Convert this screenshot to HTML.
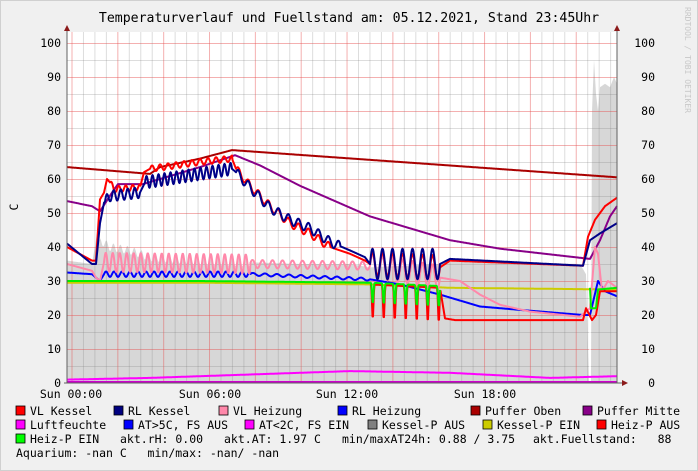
<!DOCTYPE html>
<html><head><meta charset="utf-8"><style>
html,body{margin:0;padding:0;background:#f0f0f0;}
svg{display:block;}
text{font-family:"DejaVu Sans Mono","Liberation Mono",monospace;white-space:pre;}
</style></head><body>
<svg id="s" width="698" height="471" xmlns="http://www.w3.org/2000/svg">
<rect x="0" y="0" width="698" height="471" fill="#f0f0f0"/>
<rect x="0.5" y="0.5" width="697" height="470" fill="none" stroke="#d0d0d0"/>
<rect x="67" y="32" width="550" height="351" fill="#ffffff"/>
<g id="area"></g>
<g id="grid"></g>
<g id="lines"></g>
<line x1="67" y1="383" x2="67" y2="30" stroke="#606060" stroke-width="1"/>
<polygon points="64,31 70,31 67,25" fill="#8b1a1a"/>
<line x1="617" y1="383" x2="617" y2="30" stroke="#606060" stroke-width="1"/>
<polygon points="614,31 620,31 617,25" fill="#8b1a1a"/>
<line x1="64" y1="383" x2="622" y2="383" stroke="#606060" stroke-width="1"/>
<polygon points="622,380 622,386 628,383" fill="#8b1a1a"/>
<text x="349" y="22" font-size="13.2" text-anchor="middle" fill="#000">Temperaturverlauf und Fuellstand am: 05.12.2021, Stand 23:45Uhr</text>
<text transform="translate(18,207) rotate(-90)" font-size="11.5" text-anchor="middle" fill="#000">C</text>
<text transform="translate(685,7) rotate(90)" font-size="8" fill="#c8c8c8">RRDTOOL / TOBI OETIKER</text>
<g id="ylab" font-size="11.5" fill="#000"></g>
<g font-size="11.5" fill="#000" text-anchor="middle">
<text x="71" y="398">Sun 00:00</text>
<text x="210" y="398">Sun 06:00</text>
<text x="347" y="398">Sun 12:00</text>
<text x="485" y="398">Sun 18:00</text>
</g>
<g font-size="11.5" fill="#000">
<rect x="16" y="406" width="9" height="9" fill="#ff0000" stroke="#000" stroke-width="0.8"/><text x="30" y="415">VL Kessel</text>
<rect x="114" y="406" width="9" height="9" fill="#000080" stroke="#000" stroke-width="0.8"/><text x="128" y="415">RL Kessel</text>
<rect x="219" y="406" width="9" height="9" fill="#ff88aa" stroke="#000" stroke-width="0.8"/><text x="233" y="415">VL Heizung</text>
<rect x="338" y="406" width="9" height="9" fill="#0000ff" stroke="#000" stroke-width="0.8"/><text x="352" y="415">RL Heizung</text>
<rect x="471" y="406" width="9" height="9" fill="#aa0000" stroke="#000" stroke-width="0.8"/><text x="485" y="415">Puffer Oben</text>
<rect x="583" y="406" width="9" height="9" fill="#880088" stroke="#000" stroke-width="0.8"/><text x="597" y="415">Puffer Mitte</text>
<rect x="16" y="420" width="9" height="9" fill="#ff00ff" stroke="#000" stroke-width="0.8"/><text x="30" y="429">Luftfeuchte</text>
<rect x="124" y="420" width="9" height="9" fill="#0000ff" stroke="#000" stroke-width="0.8"/><text x="138" y="429">AT&gt;5C, FS AUS</text>
<rect x="245" y="420" width="9" height="9" fill="#ff00ff" stroke="#000" stroke-width="0.8"/><text x="259" y="429">AT&lt;2C, FS EIN</text>
<rect x="368" y="420" width="9" height="9" fill="#808080" stroke="#000" stroke-width="0.8"/><text x="382" y="429">Kessel-P AUS</text>
<rect x="483" y="420" width="9" height="9" fill="#cccc00" stroke="#000" stroke-width="0.8"/><text x="497" y="429">Kessel-P EIN</text>
<rect x="597" y="420" width="9" height="9" fill="#ff0000" stroke="#000" stroke-width="0.8"/><text x="611" y="429">Heiz-P AUS</text>
<rect x="16" y="434" width="9" height="9" fill="#00ff00" stroke="#000" stroke-width="0.8"/><text x="30" y="443">Heiz-P EIN</text>
<text x="120" y="443">akt.rH: 0.00</text>
<text x="224" y="443">akt.AT: 1.97 C</text>
<text x="342" y="443">min/maxAT24h: 0.88 / 3.75</text>
<text x="533" y="443">akt.Fuellstand:   88</text>
<text x="16" y="457">Aquarium: -nan C   min/max: -nan/ -nan</text>
</g>
</svg>
<script>
var NS="http://www.w3.org/2000/svg";
function el(p,t,a){var e=document.createElementNS(NS,t);for(var k in a)e.setAttribute(k,a[k]);document.getElementById(p).appendChild(e);return e;}
function Y(v){return 383-3.4*v;}
for(var v=5;v<=100;v+=5){var maj=v%10==0;el('grid','line',{x1:67,x2:617,y1:Y(v)+0.5,y2:Y(v)+0.5,stroke:maj?'rgba(230,80,80,0.45)':'rgba(120,120,120,0.25)','stroke-width':1});}
for(var k=0;k<48;k++){var x=72+k*11.46;if(x>617)break;var maj=k%4==0;el('grid','line',{x1:x,x2:x,y1:32,y2:383,stroke:maj?'rgba(230,80,80,0.45)':'rgba(120,120,120,0.25)','stroke-width':1});}
for(var v=0;v<=100;v+=10){var t=el('ylab','text',{x:61,y:Y(v)+4,'text-anchor':'end'});t.textContent=v;var t2=el('ylab','text',{x:655,y:Y(v)+4,'text-anchor':'end'});t2.textContent=v;}
function interp(p,x){for(var i=0;i<p.length-1;i++){if(x>=p[i][0]&&x<=p[i+1][0]){var f=(x-p[i][0])/((p[i+1][0]-p[i][0])||1);return p[i][1]+f*(p[i+1][1]-p[i][1]);}}return null;}
function val(p,osc,x){var v=interp(p,x);if(v===null)return null;(osc||[]).forEach(function(o){if(x>=o[0]&&x<=o[1]){var s=Math.sin(2*Math.PI*(x-o[0])/o[3]);if(o[4]=='d')v-=o[2]*Math.pow(Math.max(0,s),6);else v+=o[2]*s;}});return v;}
function line(p,osc,col,w){var d='';var st=true;for(var x=p[0][0];x<=p[p.length-1][0];x+=0.5){var v=val(p,osc,x);if(v===null)continue;d+=(st?'M':'L')+x.toFixed(1)+' '+Y(v).toFixed(1)+' ';st=false;}el('lines','path',{d:d,fill:'none',stroke:col,'stroke-width':w||2,'stroke-linejoin':'round'});}
var ap=[[67,36],[92,35],[97,44],[100,42],[110,40],[130,39],[150,37],[200,36],[300,35],[350,35],[370,34],[440,35],[460,36],[580,35],[586,32],[589,0],[591,0],[592,80],[594,95],[596,85],[598,80],[600,87],[605,88],[610,87],[614,90],[617,88]];
var d='M67 383 ';for(var x=67;x<=617;x+=0.5){var v=interp(ap,x)+(x>100&&x<250?1.2*Math.sin(x*0.9):0);d+='L'+x+' '+Y(v).toFixed(1)+' ';}d+='L617 383 Z';
el('area','path',{d:d,fill:'#d7d7d7'});
el('lines','line',{x1:590,x2:590,y1:240,y2:383,stroke:'#ffffff','stroke-width':1.2});
line([[67,63.5],[150,61.5],[160,63.5],[200,66],[232,68.5],[617,60.5]],[],'#aa0000');
line([[67,53.5],[92,52],[100,50.5],[112,56],[118,58.5],[143,58.5],[200,63.5],[235,67],[260,64],[300,58],[370,49],[450,42],[500,39.5],[590,36.5],[600,42],[610,49],[617,52]],[],'#880088');
line([[67,29.5],[200,29.5],[370,29],[450,28],[617,27.5]],[],'#cccc00');
line([[67,32.5],[92,32],[100,30],[104,32],[250,32],[370,30.5],[400,29],[440,26],[480,22.5],[520,21.5],[583,20],[590,20],[598,30],[605,27],[617,25.5]],[[104,250,0.8,8],[250,370,0.4,12]],'#0000ff');
line([[67,35],[92,33],[96,31],[100,30],[104,35.5],[250,35],[370,34.5],[440,31],[460,30],[480,26],[500,23],[530,21],[580,19.5],[590,22],[595,40],[598,38],[602,27],[608,30],[617,28]],[[104,250,2.8,7],[250,370,1.2,10],[370,440,3.5,10]],'#ff88aa');
line([[370,29],[440,28],[445,19],[455,18.5],[583,18.5],[586,22],[592,18.5],[596,20],[600,27],[617,27]],[[370,440,10,11,'d']],'#ff0000');
line([[67,30],[200,30],[370,29.5],[440,28.5]],[[370,440,6,11,'d']],'#00ee00');
line([[590,28],[591,22],[596,22],[598,27.5],[617,28]],[],'#00ee00');
line([[67,40],[92,36],[96,36],[100,54],[104,56],[107,60],[110,59],[114,57],[140,57.5],[144,62],[150,63],[200,65],[232,66],[236,63],[250,58],[270,52],[290,47],[310,44],[330,40],[350,38],[365,36],[370,35],[440,34],[450,36],[583,34.5],[588,43],[595,48],[605,52],[617,54.5]],[[110,140,0.9,7],[150,232,0.9,8],[236,330,1.2,10],[370,440,3.5,10]],'#ff0000');
line([[67,41],[92,35],[96,35],[100,47],[104,53],[110,55],[140,56],[145,59],[232,63],[236,62],[250,57.5],[270,51.5],[290,48],[310,45.5],[330,41.5],[350,39],[365,37],[370,35],[440,35],[450,36.5],[583,34.5],[590,42],[595,43],[600,44],[617,47]],[[105,140,1.6,7],[145,232,1.8,6],[236,340,1.4,10],[370,440,4.5,10]],'#000088');
line([[67,1],[150,1.5],[350,3.5],[450,3],[550,1.5],[617,2]],[],'#ff00ff');
line([[67,0.3],[617,0.3]],[],'#cc00cc');
</script>
</body></html>
